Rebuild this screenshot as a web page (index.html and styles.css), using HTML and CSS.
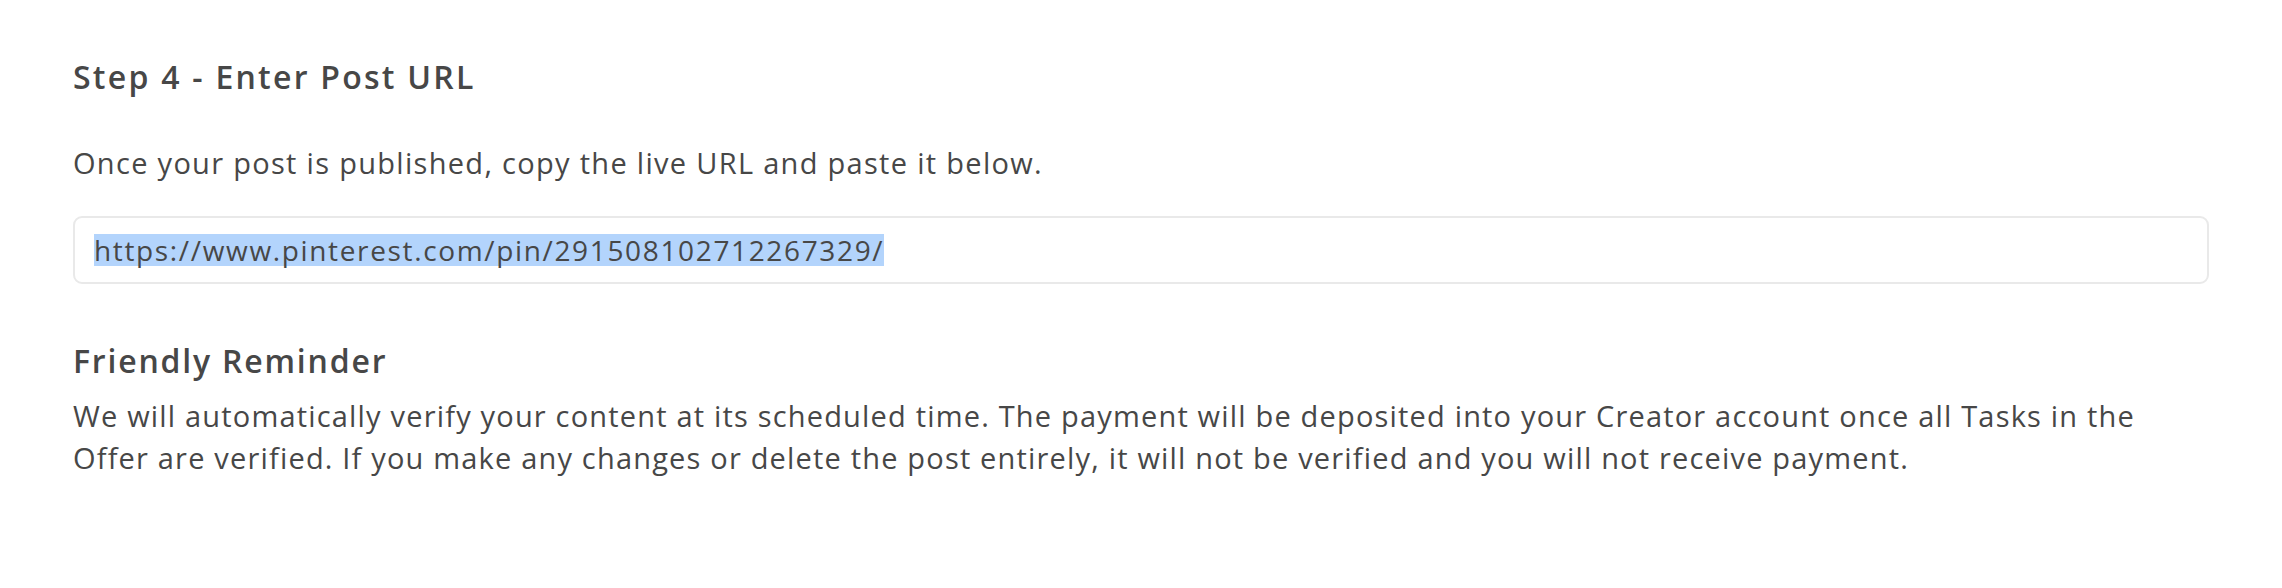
FILE: index.html
```html
<!DOCTYPE html>
<html lang="en">
<head>
    <meta charset="UTF-8">
    <meta name="viewport" content="width=device-width, initial-scale=1.0">
    <title>Step 4 - Enter Post URL</title>

    <link rel="stylesheet" href="styles.css">

</head>
<body>

    <div class="step">
        <h2 class="step-title">Step 4 - Enter Post URL</h2>
        <p class="step-text">Once your post is published, copy the live URL and paste it below.</p>
        <div class="url-field">
            <span class="url-selected">https://www.pinterest.com/pin/291508102712267329/</span>
        </div>

        <h3 class="reminder-title">Friendly Reminder</h3>
        <p class="reminder-text">We will automatically verify your content at its scheduled time. The payment will be deposited into your Creator account once all Tasks in the Offer are verified. If you make any changes or delete the post entirely, it will not be verified and you will not receive payment.</p>
    </div>

</body>
</html>
```

FILE: styles.css
```css
/* General Styling */
body {
    margin: 0;
    background: #fff;
    font-family: "Open Sans", Lato, sans-serif;
    font-variant-ligatures: none;
    color: #474747;
}

.step {
    padding: 58px 73px 0 73px;
}

.step-title {
    font-size: 32px;
    font-weight: 600;
    letter-spacing: 2.25px;
    line-height: 38px;
    margin: 0 0 46px 0;
}

.step-text {
    font-size: 29px;
    letter-spacing: 1.3px;
    line-height: 42px;
    margin: 0 0 32px 0;
}

/* URL input */
.url-field {
    border: 2px solid #e9e9e9;
    border-radius: 9px;
    padding: 16px 19px;
    font-size: 28px;
    letter-spacing: 1.65px;
    line-height: 32px;
}

.url-selected {
    display: inline-block;
    height: 32px;
    background: #b3d4fc;
}

.reminder-title {
    font-size: 32px;
    font-weight: 600;
    letter-spacing: 1.8px;
    line-height: 38px;
    margin: 58px 0 15px 0;
}

.reminder-text {
    font-size: 29px;
    letter-spacing: 1.18px;
    line-height: 42px;
    margin: 0;
}
```
